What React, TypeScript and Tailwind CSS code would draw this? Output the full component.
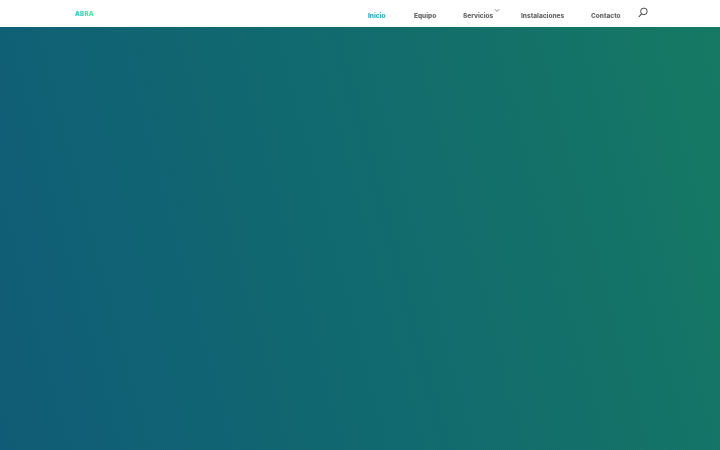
import React from "react";

const items = [
  { label: "Inicio", cls: "text-[#2ea8c8] w-[18px]" },
  { label: "Equipo", cls: "text-[#666666] w-[21px]" },
  { label: "Servicios", cls: "text-[#666666] w-[28px] mr-[2px]" },
  { label: "Instalaciones", cls: "text-[#666666] w-[42px]" },
  { label: "Contacto", cls: "text-[#666666] w-[29px]" },
];

export default function App() {
  return (
    <div className="flex h-[450px] w-[720px] flex-col overflow-hidden bg-white font-['Inter','Liberation_Sans',sans-serif]">
      <header className="flex h-[27px] shrink-0 items-start bg-white pl-[75px] pr-[72px]">
        <span className="mt-[9px] bg-gradient-to-r from-[#35c0c8] to-[#58f090] bg-clip-text text-[6.2px] leading-[9px] font-black tracking-[0.2px] text-transparent blur-[0.3px]">
          ABRA
        </span>
        <nav className="ml-auto flex items-start">
          <div className="flex items-start gap-[28px] blur-[0.25px]">
            {items.map((item) => (
              <div key={item.label} className={`relative mt-[11px] whitespace-nowrap text-[6.5px] leading-[10px] font-extrabold ${item.cls}`}>
                {item.label}
                {item.label === "Servicios" && (
                  <svg className="absolute left-[31px] top-[-3px]" width="6" height="5" viewBox="0 0 6 5" fill="none">
                    <path d="M0.8 1.2 L3 3.4 L5.2 1.2" stroke="#666666" strokeWidth="0.8" />
                  </svg>
                )}
              </div>
            ))}
          </div>
          <svg className="mt-[7px] ml-[18px]" width="10" height="11" viewBox="0 0 10 11" fill="none">
            <circle cx="5.9" cy="4.4" r="3.3" stroke="#444444" strokeWidth="1" />
            <path d="M3.6 6.8 L0.8 10" stroke="#444444" strokeWidth="1.1" />
          </svg>
        </nav>
      </header>
      <main className="flex-1 bg-[repeating-conic-gradient(rgba(0,0,0,0.025)_0%_25%,rgba(255,255,255,0.01)_0%_50%),linear-gradient(75deg,#0e5c77_0%,#106a6f_50%,#137a63_100%)] bg-[length:2px_2px,100%_100%]" />
    </div>
  );
}
